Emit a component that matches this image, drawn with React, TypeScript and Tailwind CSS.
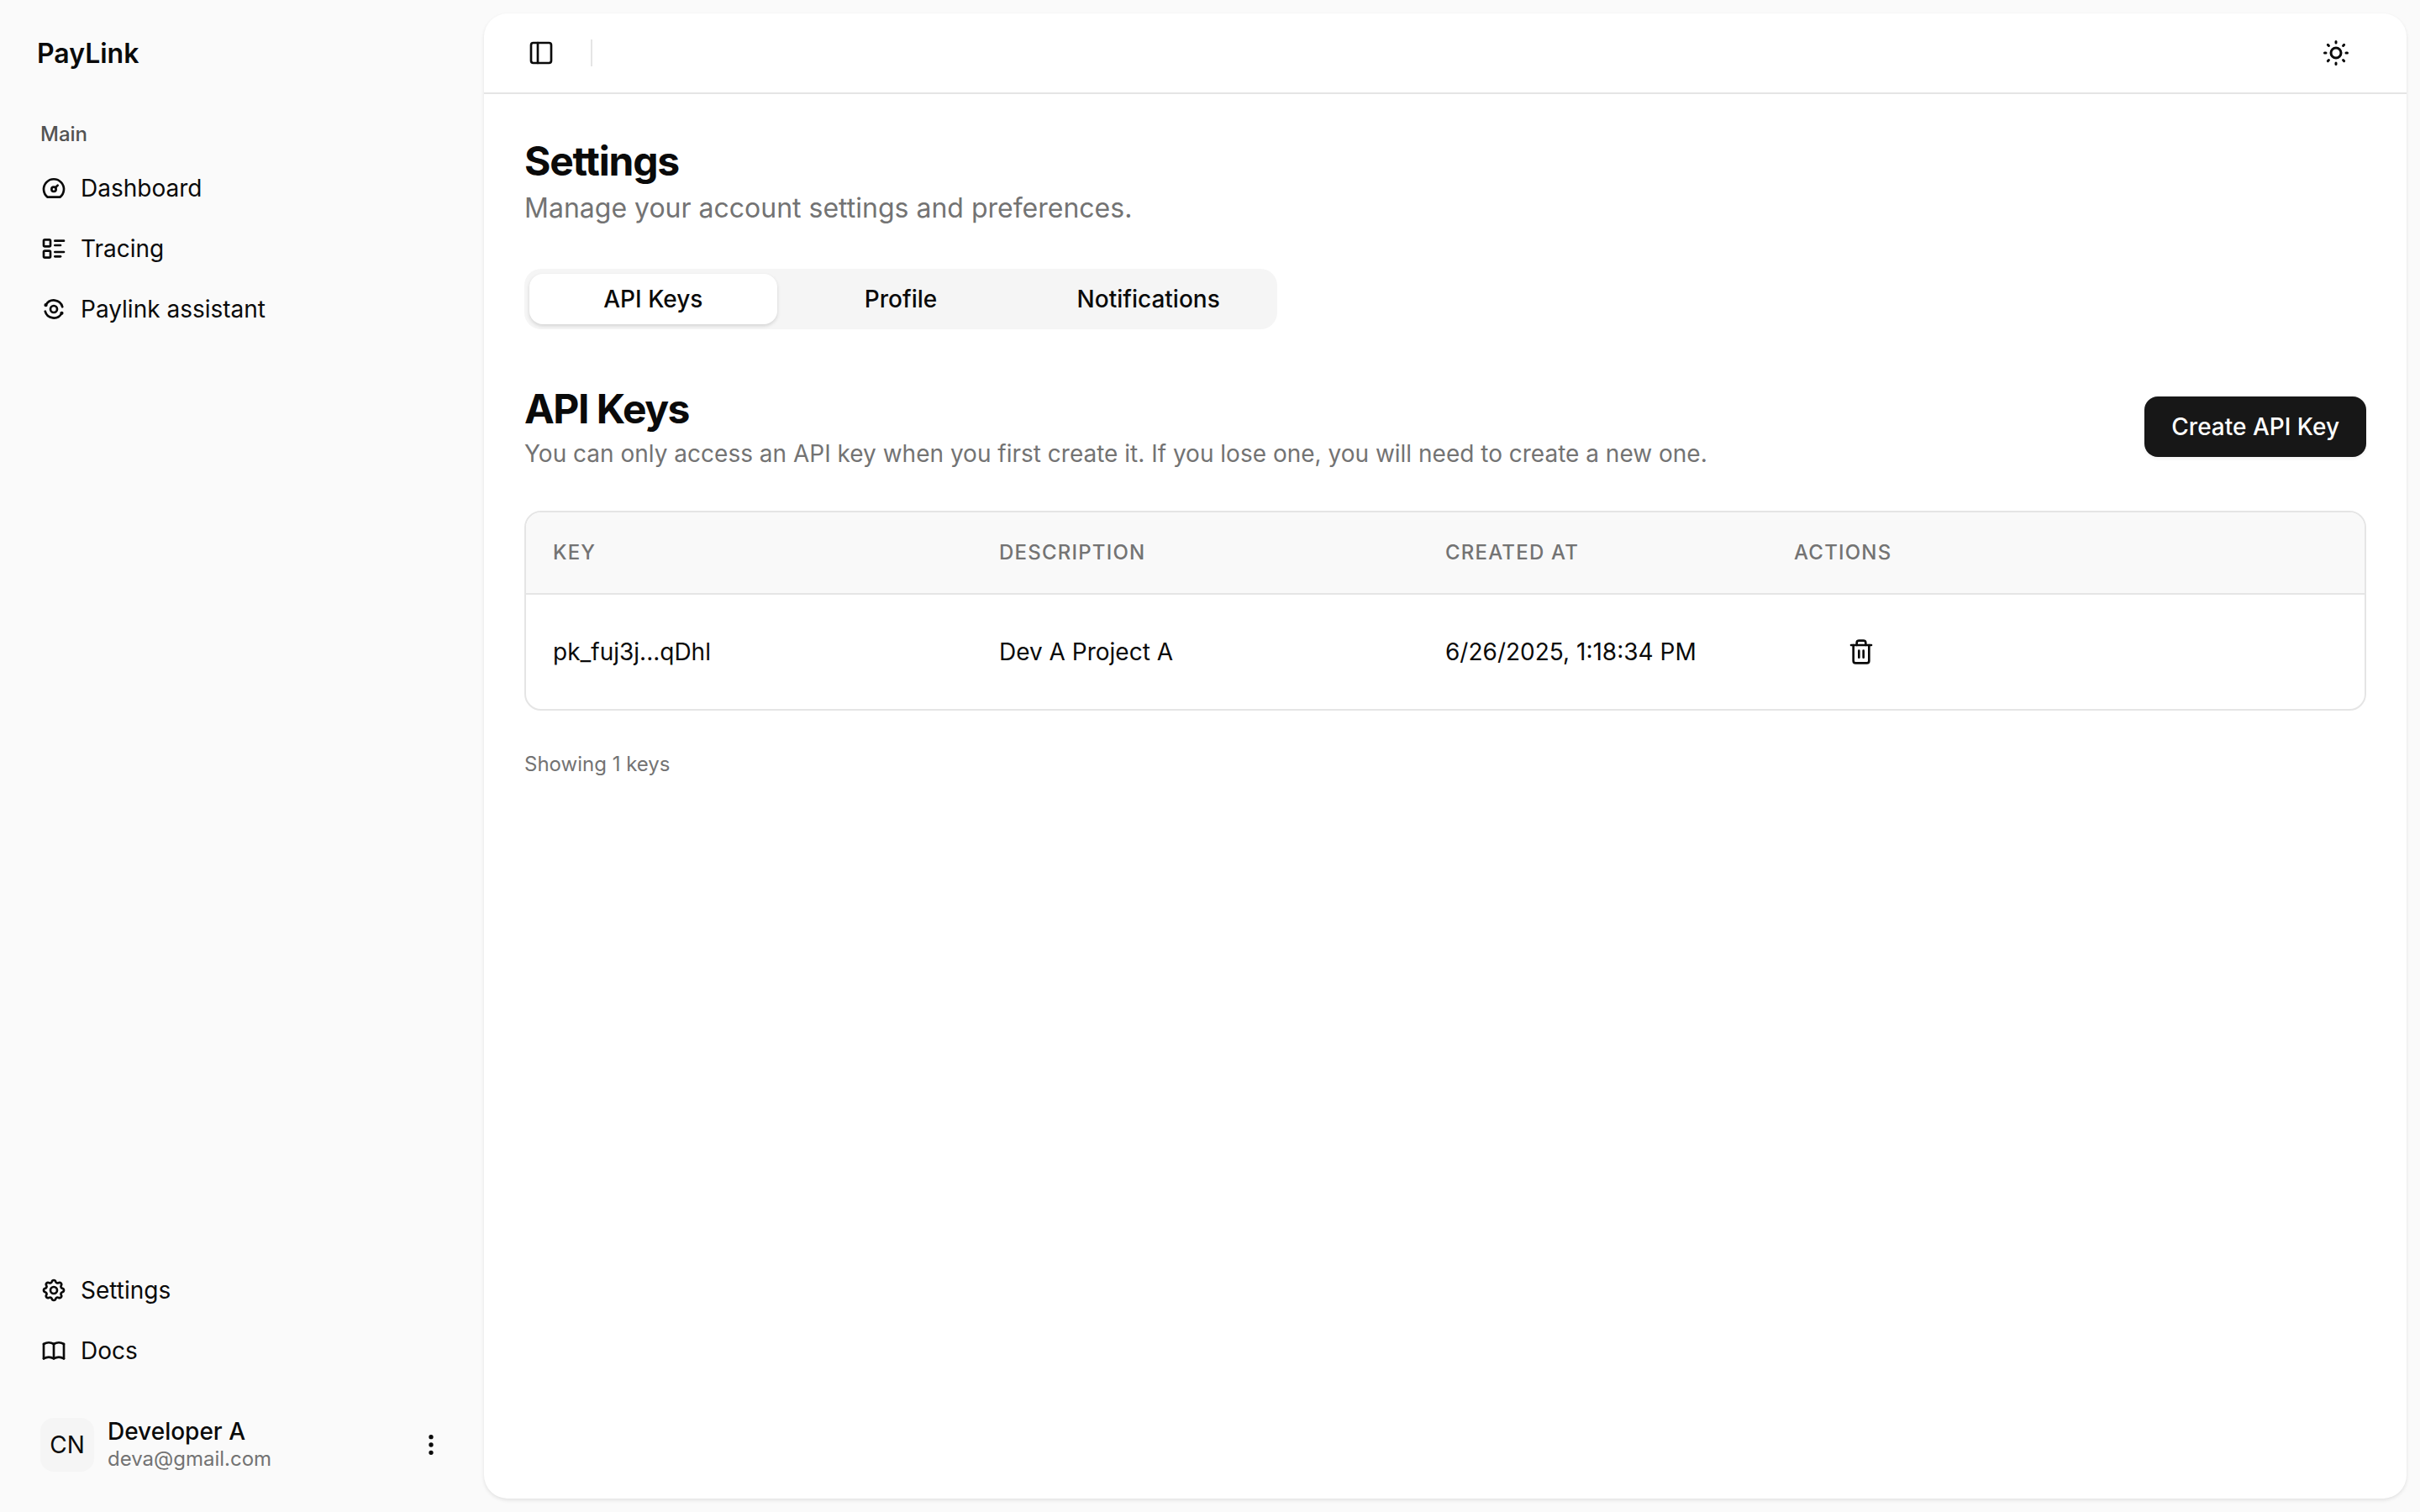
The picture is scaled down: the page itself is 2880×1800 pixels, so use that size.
import type { ReactNode } from 'react';
import {
  TbBook,
  TbDashboard,
  TbDotsVertical,
  TbListDetails,
  TbSettings,
  TbSun,
} from 'react-icons/tb';
import { PanelLeft, Trash2 } from 'lucide-react';

function AssistantIcon() {
  return (
    <svg width="32" height="32" viewBox="0 0 24 24" fill="none" stroke="currentColor" strokeWidth="2" strokeLinecap="round">
      <circle cx="12" cy="12" r="3" />
      <path d="M5 8.2A8 8 0 0 1 19.7 10" />
      <path d="M19 15.8A8 8 0 0 1 4.3 14" />
      <circle cx="4.9" cy="8.4" r="0.6" />
      <circle cx="19.1" cy="15.6" r="0.6" />
    </svg>
  );
}

const mainItems = [
  { label: 'Dashboard', icon: <TbDashboard size={32} /> },
  { label: 'Tracing', icon: <TbListDetails size={32} /> },
  { label: 'Paylink assistant', icon: <AssistantIcon /> },
];

const footerItems = [
  { label: 'Settings', icon: <TbSettings size={32} /> },
  { label: 'Docs', icon: <TbBook size={32} /> },
];

function NavItem({ label, icon }: { label: string; icon: ReactNode }) {
  return (
    <a className="flex h-[64px] items-center gap-[16px] rounded-[16px] px-[32px] text-[28px] leading-[40px] text-[#0a0a0a]">
      {icon}
      <span>{label}</span>
    </a>
  );
}

function Sidebar() {
  return (
    <aside className="flex w-[576px] shrink-0 flex-col bg-[#fafafa] px-[16px] pb-[16px]">
      <div className="flex h-[97px] items-end px-[28px]">
        <span className="pb-[9px] text-[32px] leading-[48px] font-semibold text-[#0a0a0a]">PayLink</span>
      </div>
      <div className="mt-[31px] flex h-[64px] items-center px-[32px] text-[24px] font-medium text-[#525252]">Main</div>
      <nav className="flex flex-col gap-[8px]">
        {mainItems.map((item) => (
          <NavItem key={item.label} {...item} />
        ))}
      </nav>
      <nav className="mt-auto flex flex-col gap-[8px] pb-[15px]">
        {footerItems.map((item) => (
          <NavItem key={item.label} {...item} />
        ))}
      </nav>
      <div className="mt-[32px] mb-[31px] flex items-center gap-[16px] px-[32px]">
        <div className="flex h-[64px] w-[64px] items-center justify-center rounded-[16px] bg-[#f5f5f5] text-[28px] text-[#0a0a0a]">CN</div>
        <div className="min-w-0 flex-1">
          <div className="text-[28px] leading-[34px] font-medium text-[#0a0a0a]">Developer A</div>
          <div className="text-[24px] leading-[32px] text-[#737373]">deva@gmail.com</div>
        </div>
        <TbDotsVertical size={32} className="mr-[-1px] text-[#0a0a0a]" />
      </div>
    </aside>
  );
}

function Tabs() {
  return (
    <div className="mt-[48px] grid h-[72px] w-[896px] grid-cols-3 rounded-[20px] bg-[#f5f5f5] p-[6px] text-[28px] font-medium text-[#0a0a0a]">
      <button className="rounded-[16px] bg-white shadow-[0_2px_4px_rgba(0,0,0,0.14)]">API Keys</button>
      <button>Profile</button>
      <button>Notifications</button>
    </div>
  );
}

function KeysTable() {
  return (
    <div className="mt-[48px] overflow-hidden rounded-[20px] border-2 border-[#e5e5e5]">
      <div className="grid h-[98px] grid-cols-[531px_531px_415px_1fr] items-center border-b-2 border-[#e5e5e5] bg-[#f9f9f9] px-[32px] text-[24px] font-medium tracking-[1.2px] text-[#737373] uppercase">
        <span>Key</span>
        <span>Description</span>
        <span>Created at</span>
        <span>Actions</span>
      </div>
      <div className="grid h-[136px] grid-cols-[531px_531px_415px_1fr] items-center px-[32px] text-[28px] text-[#0a0a0a]">
        <span>pk_fuj3j...qDhl</span>
        <span>Dev A Project A</span>
        <span>6/26/2025, 1:18:34 PM</span>
        <span className="pl-[64px]">
          <Trash2 size={32} strokeWidth={2} />
        </span>
      </div>
    </div>
  );
}

export default function App() {
  return (
    <div className="flex h-[1800px] bg-[#fafafa] font-['Inter',sans-serif]">
      <Sidebar />
      <main className="my-[16px] mr-[16px] flex flex-1 flex-col rounded-[28px] bg-white shadow-[0_2px_4px_rgba(0,0,0,0.1)]">
        <header className="flex h-[96px] items-center justify-between border-b-2 border-[#e5e5e5] px-[48px]">
          <div className="flex items-center gap-[43px] pl-[4px]">
            <PanelLeft size={32} className="text-[#0a0a0a]" />
            <div className="h-[32px] w-[2px] bg-[#e5e5e5]" />
          </div>
          <TbSun size={36} className="mr-[18px] text-[#0a0a0a]" />
        </header>
        <div className="flex flex-col px-[48px] pt-[48px]">
          <h1 className="text-[48px] leading-[64px] font-bold tracking-[-1.2px] text-[#0a0a0a]">Settings</h1>
          <p className="text-[32px] leading-[48px] text-[#737373]">Manage your account settings and preferences.</p>
          <Tabs />
          <div className="mt-[67px] flex items-start justify-between">
            <div>
              <h2 className="text-[48px] leading-[56px] font-bold tracking-[-1.5px] text-[#0a0a0a]">API Keys</h2>
              <p className="mt-[5px] text-[28px] leading-[40px] text-[#737373]">You can only access an API key when you first create it. If you lose one, you will need to create a new one.</p>
            </div>
            <button className="mt-[13px] h-[72px] rounded-[16px] bg-[#171717] px-[32px] text-[28px] font-medium text-white shadow-[0_2px_4px_rgba(0,0,0,0.05)]">Create API Key</button>
          </div>
          <KeysTable />
          <p className="mt-[48px] text-[24px] leading-[32px] text-[#737373]">Showing 1 keys</p>
        </div>
      </main>
    </div>
  );
}
